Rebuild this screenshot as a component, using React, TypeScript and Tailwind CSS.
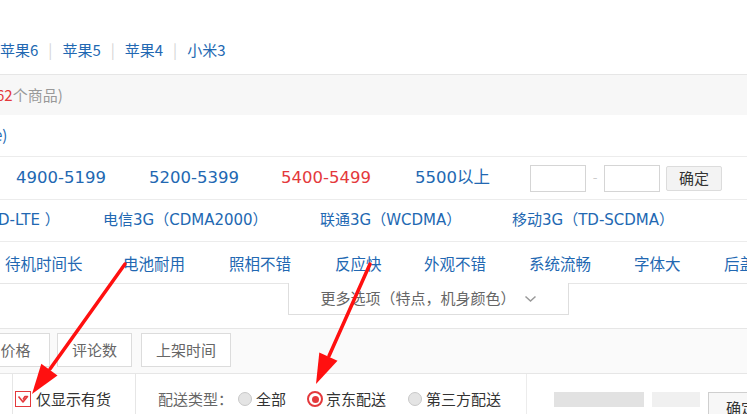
import React from "react";

const phones = ["苹果6", "苹果5", "苹果4", "小米3"];

const prices = [
    { label: "4900-5199", w: "w-[133px]", red: false },
    { label: "5200-5399", w: "w-[132px]", red: false },
    { label: "5400-5499", w: "w-[134px]", red: true },
    { label: "5500以上", w: "w-[115px]", red: false },
];

const networks = [
    { label: "D-LTE ）", w: "w-[105px]" },
    { label: "电信3G（CDMA2000）", w: "w-[217px]" },
    { label: "联通3G（WCDMA）", w: "w-[192px]" },
    { label: "移动3G（TD-SCDMA）", w: "w-auto" },
];

const features = [
    { label: "待机时间长", w: "w-[118px]" },
    { label: "电池耐用", w: "w-[106px]" },
    { label: "照相不错", w: "w-[106px]" },
    { label: "反应快", w: "w-[89px]" },
    { label: "外观不错", w: "w-[105px]" },
    { label: "系统流畅", w: "w-[105px]" },
    { label: "字体大", w: "w-[90px]" },
    { label: "后盖可拆", w: "w-auto" },
];

function Radio({ on }: { on?: boolean }) {
    if (on) {
        return (
            <span className="shrink-0 flex items-center justify-center w-[16px] h-[16px] rounded-full border-2 border-[#e4393c] bg-white">
                <span className="block w-[7px] h-[7px] rounded-full bg-[#e4393c]" />
            </span>
        );
    }
    return <span className="shrink-0 block w-[14px] h-[14px] rounded-full border border-[#c8c8c8] bg-[#e4e4e4]" />;
}

export default function App() {
    return (
        <div className="relative w-[747px] h-[414px] overflow-hidden bg-white font-['Noto_Sans_CJK_SC',sans-serif]">
            {/* related models */}
            <div className="h-[75px] pt-[40px] border-b border-[#e6e6e6] flex items-start text-[15px] leading-[20px] text-[#2268b2]">
                {phones.map((p, i) => (
                    <React.Fragment key={p}>
                        {i > 0 && <span className="mx-[10px] text-[#d5d5d5]">|</span>}
                        <span>{p}</span>
                    </React.Fragment>
                ))}
            </div>

            {/* result count */}
            <div className="h-[40px] bg-[#f7f7f7] flex items-center text-[15px] text-[#999] whitespace-nowrap">
                <span className="-ml-[4px] text-[#e4393c]">62</span>
                <span>个商品)</span>
            </div>

            {/* brand */}
            <div className="h-[42px] border-b border-[#ececec] flex items-center text-[15px] text-[#2268b2]">
                <span className="-ml-[6px]">e)</span>
            </div>

            {/* price */}
            <div className="h-[43px] border-b border-[#ececec] flex items-center font-['DejaVu_Sans','Noto_Sans_CJK_SC',sans-serif] text-[16.5px] whitespace-nowrap">
                <span className="shrink-0 w-[16px]" />
                {prices.map((p) => (
                    <span key={p.label} className={`shrink-0 ${p.w} ${p.red ? "text-[#e4393c]" : "text-[#2268b2]"}`}>
                        {p.label}
                    </span>
                ))}
                <span className="shrink-0 w-[56px] h-[27px] border border-[#d5d5d5] bg-white" />
                <span className="shrink-0 w-[18px] text-center text-[13px] text-[#ccc]">-</span>
                <span className="shrink-0 w-[56px] h-[27px] border border-[#d5d5d5] bg-white" />
                <span className="shrink-0 ml-[6px] w-[56px] h-[25px] border border-[#dcdcdc] bg-[#f3f3f3] rounded-[2px] flex items-center justify-center text-[15px] text-[#333] font-['Noto_Sans_CJK_SC',sans-serif]">
                    确定
                </span>
            </div>

            {/* network */}
            <div className="h-[42px] border-b border-[#ececec] flex items-center font-['DejaVu_Sans','Noto_Sans_CJK_SC',sans-serif] text-[15px] text-[#2268b2] whitespace-nowrap">
                {networks.map((n, i) => (
                    <span key={n.label} className={`shrink-0 ${n.w} ${i === 0 ? "-ml-[2px]" : ""}`}>
                        {n.label}
                    </span>
                ))}
            </div>

            {/* features */}
            <div className="h-[42px] pt-[3px] border-b border-[#e6e6e6] flex items-center pl-[5px] text-[15.5px] text-[#2268b2] whitespace-nowrap">
                {features.map((f) => (
                    <span key={f.label} className={`shrink-0 ${f.w}`}>
                        {f.label}
                    </span>
                ))}
            </div>

            {/* more options tab */}
            <div className="relative z-10 -mt-px ml-[288px] w-[281px] h-[32px] border-x border-b border-[#dedede] bg-white flex items-center justify-center gap-[8px] text-[15px] text-[#666]">
                <span>更多选项（特点，机身颜色）</span>
                <svg width="13" height="8" viewBox="0 0 13 8" className="mt-[1px]">
                    <polyline points="1.5,1.5 6.5,6 11.5,1.5" fill="none" stroke="#999" strokeWidth="1.5" />
                </svg>
            </div>

            {/* sort */}
            <div className="mt-[13px] h-[46px] border-y border-[#e6e6e6] bg-[#fafafa] pt-[4px] flex items-start text-[15px] text-[#666]">
                <span className="shrink-0 -ml-[25px] w-[75px] h-[34px] border border-[#dcdcdc] bg-white flex items-center justify-center pl-[6px]">价格</span>
                <span className="shrink-0 ml-[7px] w-[75px] h-[34px] border border-[#dcdcdc] bg-white flex items-center justify-center">评论数</span>
                <span className="shrink-0 ml-[9px] w-[90px] h-[34px] border border-[#dcdcdc] bg-white flex items-center justify-center">上架时间</span>
            </div>

            {/* stock / delivery */}
            <div className="h-[50px] flex items-center text-[15px] whitespace-nowrap">
                <span className="shrink-0 w-[13px] self-stretch border-r border-[#e6e6e6]" />
                <span className="shrink-0 ml-[2px] w-[16px] h-[16px] border border-[#e4393c] bg-white flex items-center justify-center">
                    <svg width="12" height="10" viewBox="0 0 12 10">
                        <path d="M1.5 2.5 L6 8 L10.5 2.5 L8 2.5 L6 5.5" fill="none" stroke="#e4393c" strokeWidth="1.6" strokeLinejoin="round" />
                    </svg>
                </span>
                <span className="shrink-0 ml-[5px] text-[#333]">仅显示有货</span>
                <span className="shrink-0 ml-[24px] self-stretch border-l border-[#e6e6e6]" />
                <span className="shrink-0 ml-[22px] text-[#666]">配送类型：</span>
                <span className="shrink-0 ml-[5px] flex"><Radio /></span>
                <span className="shrink-0 ml-[4px] text-[#333]">全部</span>
                <span className="shrink-0 ml-[21px] flex"><Radio on /></span>
                <span className="shrink-0 ml-[3px] text-[#333]">京东配送</span>
                <span className="shrink-0 ml-[22px] flex"><Radio /></span>
                <span className="shrink-0 ml-[4px] text-[#333]">第三方配送</span>
                <span className="shrink-0 ml-[25px] self-stretch border-l border-[#ececec] flex items-center">
                    <span className="ml-[27px] w-[90px] h-[15px] bg-[#e2e2e2]" />
                    <span className="ml-[8px] w-[48px] h-[15px] bg-[#f0f0f0]" />
                </span>
                <span className="shrink-0 ml-[8px] w-[60px] h-[32px] self-end border border-[#cfcfcf] bg-[#f7f7f7] flex items-center pl-[17px] text-[#333]">
                    确定
                </span>
            </div>

            {/* annotation arrows */}
            <svg className="absolute inset-0 z-20 pointer-events-none" width="747" height="414" viewBox="0 0 747 414">
                <line x1="125" y1="264" x2="50" y2="369" stroke="#ff1010" strokeWidth="3.5" strokeLinecap="round" />
                <polygon points="32,394 57.5,375.4 41.3,363.8" fill="#ff1010" />
                <line x1="370" y1="264" x2="329" y2="356" stroke="#ff1010" strokeWidth="3.5" strokeLinecap="round" />
                <polygon points="316,384 337.5,360.8 319.3,352.6" fill="#ff1010" />
            </svg>
        </div>
    );
}
